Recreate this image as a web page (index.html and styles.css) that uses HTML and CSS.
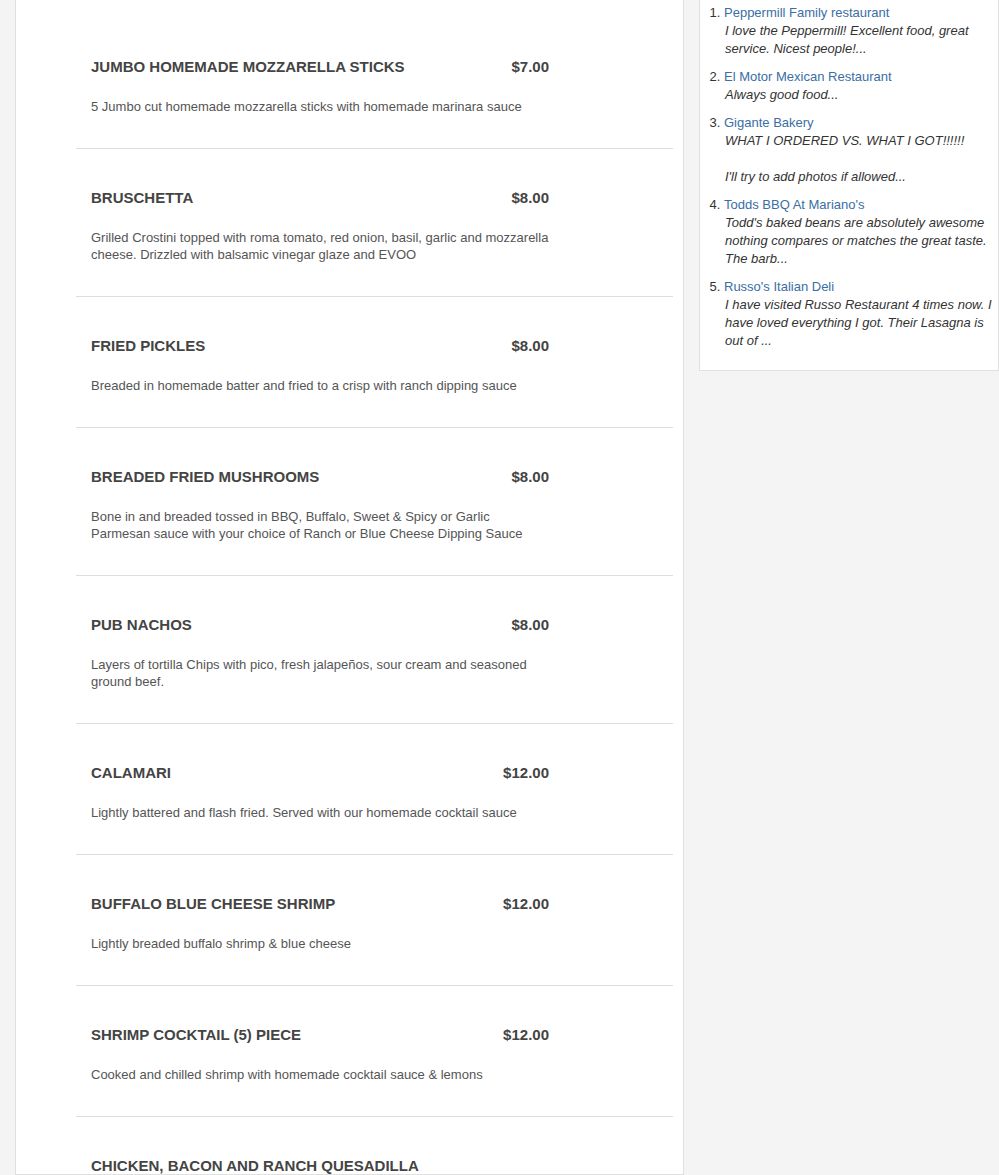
FILE: index.html
```html
<!DOCTYPE html>
<html>
<head>
<meta charset="utf-8">
<link rel="stylesheet" href="styles.css">
</head>
<body>
<div class="page">
  <main class="menu-panel">
    <div class="item">
      <div class="item-inner">
        <div class="item-head"><h3>JUMBO HOMEMADE MOZZARELLA STICKS</h3><span class="price">$7.00</span></div>
        <p class="desc">5 Jumbo cut homemade mozzarella sticks with homemade marinara sauce</p>
      </div>
    </div>
    <div class="item">
      <div class="item-inner">
        <div class="item-head"><h3>BRUSCHETTA</h3><span class="price">$8.00</span></div>
        <p class="desc">Grilled Crostini topped with roma tomato, red onion, basil, garlic and mozzarella cheese. Drizzled with balsamic vinegar glaze and EVOO</p>
      </div>
    </div>
    <div class="item">
      <div class="item-inner">
        <div class="item-head"><h3>FRIED PICKLES</h3><span class="price">$8.00</span></div>
        <p class="desc">Breaded in homemade batter and fried to a crisp with ranch dipping sauce</p>
      </div>
    </div>
    <div class="item">
      <div class="item-inner">
        <div class="item-head"><h3>BREADED FRIED MUSHROOMS</h3><span class="price">$8.00</span></div>
        <p class="desc">Bone in and breaded tossed in BBQ, Buffalo, Sweet &amp; Spicy or Garlic Parmesan sauce with your choice of Ranch or Blue Cheese Dipping Sauce</p>
      </div>
    </div>
    <div class="item">
      <div class="item-inner">
        <div class="item-head"><h3>PUB NACHOS</h3><span class="price">$8.00</span></div>
        <p class="desc">Layers of tortilla Chips with pico, fresh jalapeños, sour cream and seasoned ground beef.</p>
      </div>
    </div>
    <div class="item">
      <div class="item-inner">
        <div class="item-head"><h3>CALAMARI</h3><span class="price">$12.00</span></div>
        <p class="desc">Lightly battered and flash fried. Served with our homemade cocktail sauce</p>
      </div>
    </div>
    <div class="item">
      <div class="item-inner">
        <div class="item-head"><h3>BUFFALO BLUE CHEESE SHRIMP</h3><span class="price">$12.00</span></div>
        <p class="desc">Lightly breaded buffalo shrimp &amp; blue cheese</p>
      </div>
    </div>
    <div class="item">
      <div class="item-inner">
        <div class="item-head"><h3>SHRIMP COCKTAIL (5) PIECE</h3><span class="price">$12.00</span></div>
        <p class="desc">Cooked and chilled shrimp with homemade cocktail sauce &amp; lemons</p>
      </div>
    </div>
    <div class="item">
      <div class="item-inner">
        <div class="item-head"><h3>CHICKEN, BACON AND RANCH QUESADILLA</h3><span class="price"></span></div>
      </div>
    </div>
  </main>
  <aside class="side-panel">
    <ol class="reviews">
      <li><a href="#">Peppermill Family restaurant</a><em>I love the Peppermill! Excellent food, great service. Nicest people!...</em></li>
      <li><a href="#">El Motor Mexican Restaurant</a><em>Always good food...</em></li>
      <li><a href="#">Gigante Bakery</a><em>WHAT I ORDERED VS. WHAT I GOT!!!!!!<br><br>I'll try to add photos if allowed...</em></li>
      <li><a href="#">Todds BBQ At Mariano's</a><em>Todd's baked beans are absolutely awesome nothing compares or matches the great taste. The barb...</em></li>
      <li><a href="#">Russo's Italian Deli</a><em>I have visited Russo Restaurant 4 times now. I have loved everything I got. Their Lasagna is out of ...</em></li>
    </ol>
  </aside>
</div>
</body>
</html>
```

FILE: styles.css
```css
html, body {
  margin: 0;
  padding: 0;
}
body {
  background: #f4f4f4;
  font-family: "Liberation Sans", Arial, sans-serif;
  color: #444;
  height: 1175px;
  overflow: hidden;
}
.page {
  display: flex;
  align-items: flex-start;
  gap: 15px;
  padding-left: 15px;
}
.menu-panel {
  width: 669px;
  box-sizing: border-box;
  background: #fff;
  border: 1px solid #e0e0e0;
  border-top: none;
  padding: 18px 10px 0 60px;
  height: 1175px;
  overflow: hidden;
}
.item {
  border-bottom: 1px solid #ddd;
  padding: 40px 15px 33px;
}
.item-inner {
  width: 458px;
}
.item-head {
  display: flex;
  justify-content: space-between;
  align-items: baseline;
}
.item-head h3 {
  margin: 0;
  font-size: 15px;
  line-height: 18px;
  font-weight: bold;
  color: #444;
}
.price {
  font-size: 15px;
  line-height: 18px;
  font-weight: bold;
  color: #444;
}
.desc {
  margin: 22px 0 0;
  font-size: 13px;
  line-height: 17px;
  color: #555;
}
.side-panel {
  width: 300px;
  box-sizing: border-box;
  background: #fff;
  border: 1px solid #e0e0e0;
  border-top: none;
  padding: 4px 4px 20px 0;
}
.reviews {
  margin: 0;
  padding-left: 24px;
  font-size: 13px;
  line-height: 18px;
  color: #333;
}
.reviews li {
  margin-bottom: 10px;
}
.reviews li:last-child {
  margin-bottom: 0;
}
.reviews a {
  display: block;
  color: #3a6ea5;
  text-decoration: none;
}
.reviews em {
  display: block;
  font-style: italic;
  color: #333;
  padding-left: 1px;
}
```
